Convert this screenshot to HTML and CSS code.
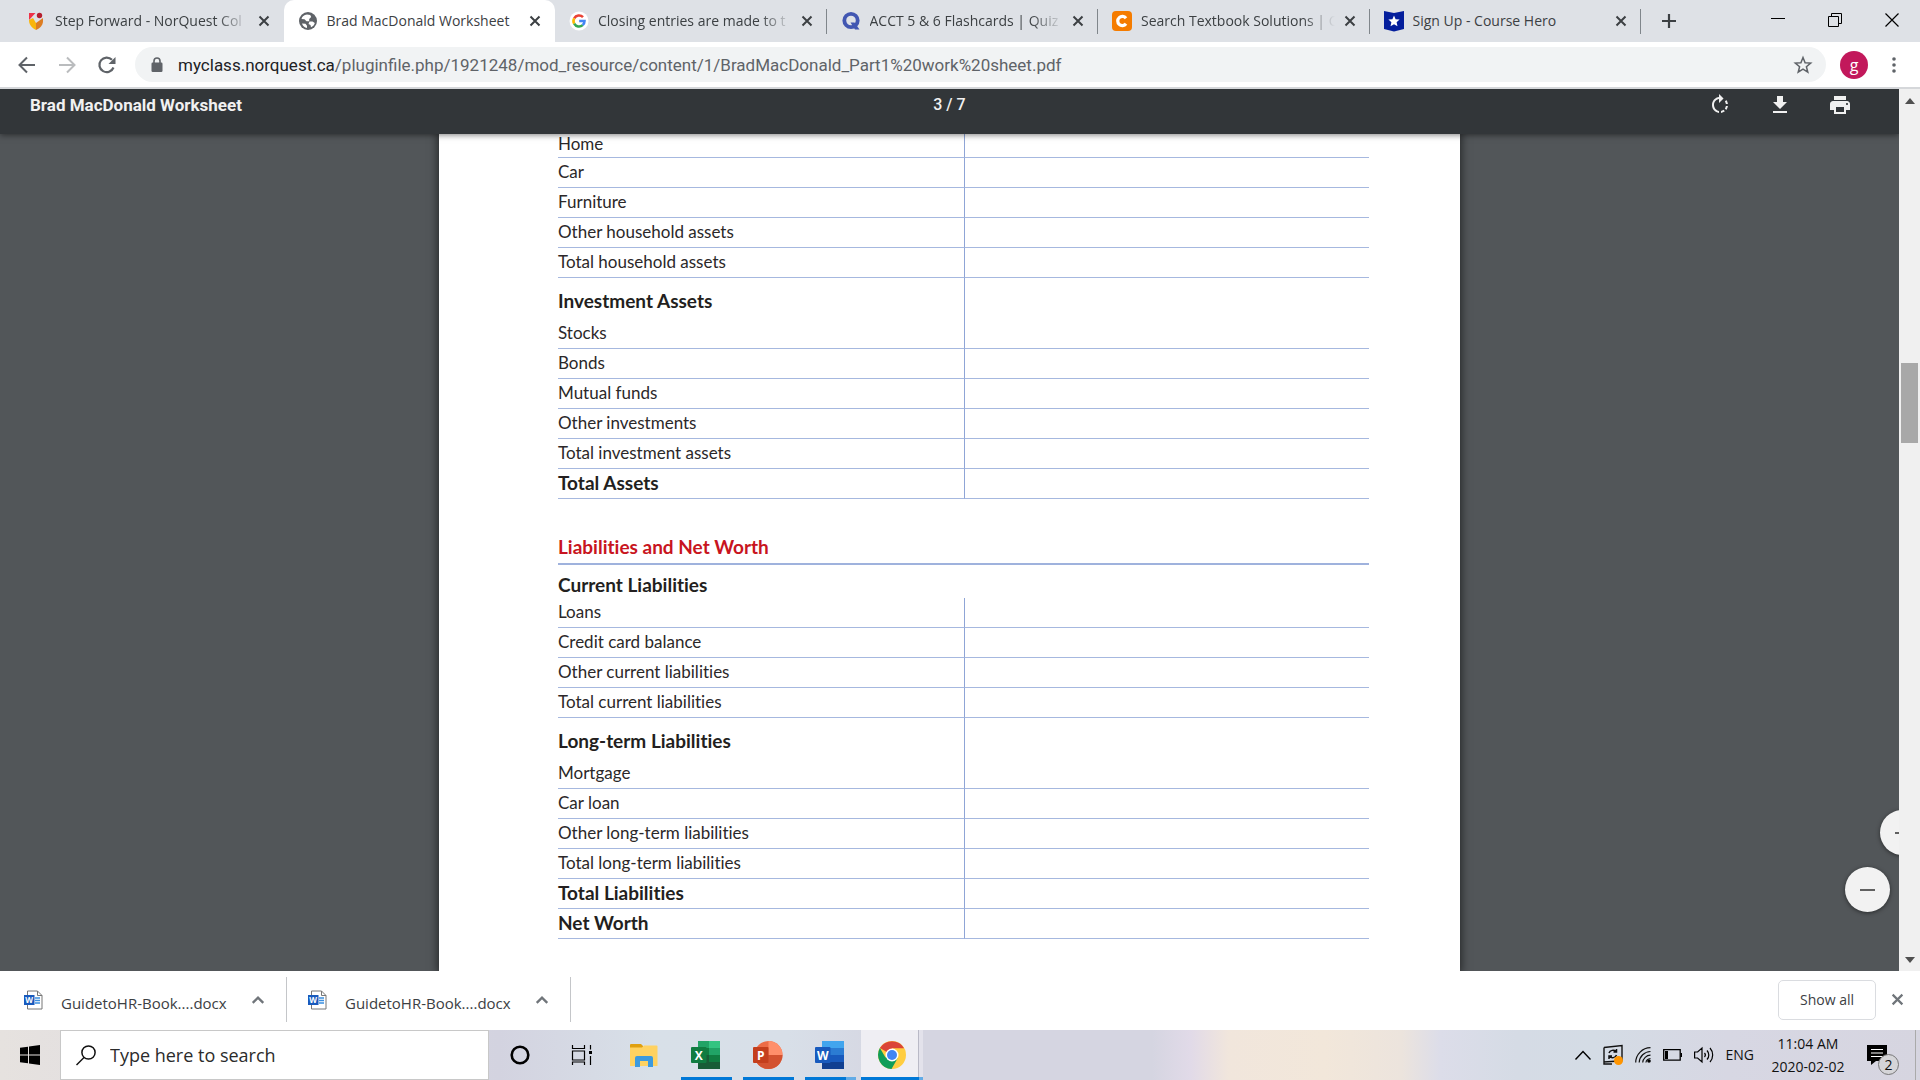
FILE: index.html
```html
<!DOCTYPE html>
<html lang="en">
<head>
<meta charset="utf-8">
<title>Brad MacDonald Worksheet</title>
<link rel="stylesheet" href="styles.css">
</head>
<body>
<svg class="defs" width="0" height="0" aria-hidden="true">
  <symbol id="close" viewBox="0 0 12 12"><path d="M1.5 1.5l9 9M10.5 1.5l-9 9" fill="none" stroke="currentColor" stroke-width="2"/></symbol>
  <symbol id="up" viewBox="0 0 12 12"><path d="M1.5 8.5L6 4l4.500 4.500" fill="none" stroke="currentColor" stroke-width="2"/></symbol>
  <symbol id="docx" viewBox="0 0 20 20"><path d="M3.500 1h10l4.500 4.500V19H3.500z" fill="#fff" stroke="#777"/><path d="M13.500 1v4.500H18" fill="none" stroke="#777"/><path d="M11 8h5M11 10.500h5M11 13h5" stroke="#3a8ee0" stroke-width="1.300"/><rect y="5" width="10.500" height="10" fill="#185abd"/><text x="5.200" y="13" text-anchor="middle" font-family="Open Sans, sans-serif" font-weight="700" font-size="8" fill="#fff">W</text></symbol>
</svg>

<header class="tabstrip">
  <nav class="tabs" aria-label="Tabs">
    <div class="tab">
      <svg class="favicon" viewBox="0 0 18 18"><path d="M2 1h6.500L2 8z" fill="#ee3148"/><circle cx="12.500" cy="3.500" r="2.700" fill="#b5202f"/><path d="M2 8l4-2 3 5v7C4 15.500 2 12 2 8z" fill="#f9b50b"/><path d="M16 6v3c0 4-3 7.500-7 9v-7z" fill="#dd7d22"/></svg>
      <a href="#" class="title">Step Forward - NorQuest Col</a>
      <button aria-label="Close tab"><svg><use href="#close"/></svg></button>
    </div>
    <div class="tab active">
      <svg class="favicon" viewBox="0 0 18 18"><circle cx="9" cy="9" r="9" fill="#5f6368"/><path d="M8 2.500c-3 .5-5 2-5.500 4.500l3 .2 2 2h2.700V7l2-2-1-2zM3 11.500l3.500.3 1.500 2V16C5.500 15.500 3.800 14 3 11.500zM10.500 9.500h3l2.300 1.500c-.6 2-2 3.600-3.800 4.300l-.5-2.300-2-1z" fill="#fff"/></svg>
      <a href="#" class="title whole">Brad MacDonald Worksheet</a>
      <button aria-label="Close tab"><svg><use href="#close"/></svg></button>
    </div>
    <div class="tab">
      <svg class="favicon" viewBox="0 0 18 18"><circle cx="9" cy="9" r="9.500" fill="#fff"/><g fill="none" stroke-width="2.600"><path d="M4.200 6.300A5.500 5.500 0 0 1 13 5.200" stroke="#ea4335"/><path d="M4.200 11.700a5.500 5.500 0 0 1 0-5.400" stroke="#fbbc05"/><path d="M12.700 13.100a5.500 5.500 0 0 1-8.500-1.400" stroke="#34a853"/><path d="M9.200 9h5.300a5.500 5.500 0 0 1-1.800 4.100" stroke="#4285f4"/></g></svg>
      <a href="#" class="title">Closing entries are made to t</a>
      <button aria-label="Close tab"><svg><use href="#close"/></svg></button>
    </div>
    <div class="tab">
      <svg class="favicon" viewBox="0 0 18 18"><circle cx="9" cy="8.500" r="6.700" fill="none" stroke="#4257b2" stroke-width="3.800"/><path d="M8.500 10.500h4l5 7h-4.500z" fill="#4257b2"/></svg>
      <a href="#" class="title">ACCT 5 &amp; 6 Flashcards | Quiz</a>
      <button aria-label="Close tab"><svg><use href="#close"/></svg></button>
    </div>
    <div class="tab">
      <svg class="favicon" viewBox="0 0 18 18"><rect x="-1" y="-1" width="20" height="20" rx="4" fill="#f57c00"/><path d="M13 6.200A4.600 4.600 0 1 0 13 11.800" fill="none" stroke="#fff" stroke-width="3.200"/></svg>
      <a href="#" class="title">Search Textbook Solutions | C</a>
      <button aria-label="Close tab"><svg><use href="#close"/></svg></button>
    </div>
    <div class="tab">
      <svg class="favicon" viewBox="0 0 18 18"><path d="M-1-1l10 2 10-2v18L9 19.500-1 17z" fill="#041e9c"/><path d="M9 3.500l1.600 3.700 4 .4-3 2.700.9 4L9 12.200l-3.500 2.100.9-4-3-2.700 4-.4z" fill="#fff"/></svg>
      <a href="#" class="title whole">Sign Up - Course Hero</a>
      <button aria-label="Close tab"><svg><use href="#close"/></svg></button>
    </div>
  </nav>
  <button class="new-tab" aria-label="New tab"><svg width="16" height="16" viewBox="0 0 16 16"><path d="M8 1v14M1 8h14" stroke="#3c4043" stroke-width="2.200"/></svg></button>
  <div class="window-controls">
    <button aria-label="Minimize"><svg width="14" height="14"><path d="M0 5.500h14" stroke="#000"/></svg></button>
    <button aria-label="Restore"><svg width="14" height="14"><path d="M.5 3.500h10v10H.5zM3.500 3V.5h10v10H11" fill="none" stroke="#000"/></svg></button>
    <button aria-label="Close"><svg width="14" height="14"><path d="M.5.5l13 13M13.500.5l-13 13" stroke="#000" stroke-width="1.200"/></svg></button>
  </div>
</header>

<div class="toolbar">
  <button aria-label="Back"><svg width="18" height="18" viewBox="0 0 18 18"><path d="M17 9H2M9 1.500L1.500 9 9 16.500" fill="none" stroke="#5f6368" stroke-width="2"/></svg></button>
  <button aria-label="Forward"><svg width="18" height="18" viewBox="0 0 18 18"><path d="M1 9h15M9 1.500L16.500 9 9 16.500" fill="none" stroke="#babcbe" stroke-width="2"/></svg></button>
  <button aria-label="Reload"><svg width="18" height="18" viewBox="0 0 18 18"><path d="M15.500 11.500A7.300 7.300 0 1 1 14 3.800" fill="none" stroke="#5f6368" stroke-width="2.200"/><path d="M17.500 1v7h-7z" fill="#5f6368"/></svg></button>
  <div class="omnibox">
    <svg width="12" height="16" viewBox="0 0 12 16"><path d="M3 7V4a3 3 0 0 1 6 0v3" fill="none" stroke="#5f6368" stroke-width="1.600"/><rect x="0.500" y="5.500" width="11" height="9.500" rx="1.200" fill="#5f6368"/></svg>
    <a class="url" href="#"><b>myclass.norquest.ca</b>/pluginfile.php/1921248/mod_resource/content/1/BradMacDonald_Part1%20work%20sheet.pdf</a>
    <button aria-label="Bookmark this page"><svg width="18" height="18" viewBox="0 0 18 18"><path d="M9 1.500l2.100 5.200 5.600.4-4.300 3.600 1.400 5.500L9 13.200l-4.800 3 1.400-5.500L1.300 7.100l5.600-.4z" fill="none" stroke="#5f6368" stroke-width="1.500"/></svg></button>
  </div>
  <button class="avatar" aria-label="Profile">g</button>
  <button class="more" aria-label="Menu"><svg width="4" height="18"><circle cx="2" cy="3" r="1.800"/><circle cx="2" cy="9" r="1.800"/><circle cx="2" cy="15" r="1.800"/></svg></button>
</div>

<main class="viewer">
  <section class="document">
    <div class="pdf-bar">
      <h1>Brad MacDonald Worksheet</h1>
      <span class="pages">3 / 7</span>
      <div class="pdf-actions">
        <button aria-label="Rotate"><svg width="24" height="24" viewBox="0 0 24 24" fill="#f1f1f1"><path d="M15.550 5.550L11 1v3.070C7.060 4.560 4 7.920 4 12s3.050 7.440 7 7.930v-2.020c-2.840-.48-5-2.940-5-5.910s2.160-5.430 5-5.910V10l4.550-4.450zM19.930 11c-.17-1.390-.72-2.730-1.620-3.890l-1.420 1.420c.54.750.88 1.600 1.020 2.470h2.020zM13 17.900v2.020c1.390-.17 2.740-.71 3.900-1.610l-1.440-1.440c-.75.540-1.590.890-2.460 1.030zm3.890-2.420l1.420 1.410c.9-1.160 1.450-2.500 1.620-3.890h-2.020c-.14.870-.48 1.720-1.020 2.480z"/></svg></button>
        <button aria-label="Download"><svg width="24" height="24" viewBox="0 0 24 24" fill="#f1f1f1"><path d="M19 9h-4V3H9v6H5l7 7 7-7zM5 18v2h14v-2H5z"/></svg></button>
        <button aria-label="Print"><svg width="24" height="24" viewBox="0 0 24 24" fill="#f1f1f1"><path d="M19 8H5c-1.660 0-3 1.340-3 3v6h4v4h12v-4h4v-6c0-1.660-1.340-3-3-3zm-3 11H8v-5h8v5zm3-7c-.55 0-1-.45-1-1s.45-1 1-1 1 .45 1 1-.45 1-1 1zm-1-9H6v4h12V3z"/></svg></button>
      </div>
    </div>
    <article class="sheet">
      <table>
        <tbody>
          <tr class="first"><th scope="row">Home</th><td></td></tr>
          <tr><th scope="row">Car</th><td></td></tr>
          <tr><th scope="row">Furniture</th><td></td></tr>
          <tr><th scope="row">Other household assets</th><td></td></tr>
          <tr><th scope="row">Total household assets</th><td></td></tr>
          <tr class="group"><th scope="row">Investment Assets</th><td></td></tr>
          <tr><th scope="row">Stocks</th><td></td></tr>
          <tr><th scope="row">Bonds</th><td></td></tr>
          <tr><th scope="row">Mutual funds</th><td></td></tr>
          <tr><th scope="row">Other investments</th><td></td></tr>
          <tr><th scope="row">Total investment assets</th><td></td></tr>
          <tr class="total"><th scope="row">Total Assets</th><td></td></tr>
        </tbody>
      </table>
      <h2>Liabilities and Net Worth</h2>
      <table>
        <tbody>
          <tr class="group lead"><th scope="row">Current Liabilities</th><td></td></tr>
          <tr><th scope="row">Loans</th><td></td></tr>
          <tr><th scope="row">Credit card balance</th><td></td></tr>
          <tr><th scope="row">Other current liabilities</th><td></td></tr>
          <tr><th scope="row">Total current liabilities</th><td></td></tr>
          <tr class="group"><th scope="row">Long-term Liabilities</th><td></td></tr>
          <tr><th scope="row">Mortgage</th><td></td></tr>
          <tr><th scope="row">Car loan</th><td></td></tr>
          <tr><th scope="row">Other long-term liabilities</th><td></td></tr>
          <tr><th scope="row">Total long-term liabilities</th><td></td></tr>
          <tr class="total"><th scope="row">Total Liabilities</th><td></td></tr>
          <tr class="total"><th scope="row">Net Worth</th><td></td></tr>
        </tbody>
      </table>
    </article>
    <button class="zoom zoom-in" aria-label="Zoom in"></button>
    <button class="zoom zoom-out" aria-label="Zoom out"></button>
  </section>
  <div class="scrollbar" aria-hidden="true">
    <svg width="10" height="6"><path d="M0 6l5-6 5 6z" fill="#505050"/></svg>
    <div class="track"><div class="thumb"></div></div>
    <svg width="10" height="6"><path d="M0 0l5 6 5-6z" fill="#505050"/></svg>
  </div>
</main>

<section class="downloads" aria-label="Downloads">
  <div class="download">
    <svg class="file"><use href="#docx"/></svg>
    <a href="#">GuidetoHR-Book....docx</a>
    <button aria-label="Options"><svg><use href="#up"/></svg></button>
  </div>
  <div class="download">
    <svg class="file"><use href="#docx"/></svg>
    <a href="#">GuidetoHR-Book....docx</a>
    <button aria-label="Options"><svg><use href="#up"/></svg></button>
  </div>
  <button class="show-all">Show all</button>
  <button class="dismiss" aria-label="Close downloads"><svg><use href="#close"/></svg></button>
</section>

<footer class="taskbar">
  <button class="start" aria-label="Start"><svg width="20" height="20" viewBox="0 0 20 20"><path d="M0 2.800L8 1.700v7.800H0zM9 1.500L20 0v9.500H9zM0 10.500h8v7.800l-8-1.100zM9 10.500h11V20L9 18.500z"/></svg></button>
  <label class="search">
    <svg width="20" height="20" viewBox="0 0 20 20"><circle cx="12.500" cy="7.500" r="6.600" fill="none" stroke="#111" stroke-width="1.500"/><path d="M8 12.500L.5 20" stroke="#111" stroke-width="1.500"/></svg>
    <input type="text" placeholder="Type here to search" aria-label="Search">
  </label>
  <nav class="apps" aria-label="Taskbar apps">
    <button aria-label="Cortana"><svg width="20" height="20"><circle cx="10" cy="10" r="8.300" fill="none" stroke="#000" stroke-width="2.600"/></svg></button>
    <button aria-label="Task view"><svg width="20" height="20" viewBox="0 0 20 20"><path d="M.5 0v3.500h12V0M.5 6h12v9H.5zM.5 20v-3h12v3M18.500 0v4.500M18.500 11v9" fill="none" stroke="#000" stroke-width="1.200"/><path d="M17 6h3v3h-3z"/></svg></button>
    <button aria-label="File Explorer"><svg width="28" height="28" viewBox="0 0 28 28"><path d="M0 4V4a1 1 0 0 1 1-1h10l2 2v4H0z" fill="#e0a00f"/><path d="M0 6.500h12l2-2h12.500a1 1 0 0 1 1 1V25H0z" fill="#ffd261"/><path d="M5 26V17a2 2 0 0 1 2-2h14a2 2 0 0 1 2 2v9h-5v-6h-8v6z" fill="#3d9ade"/></svg></button>
    <button class="running" aria-label="Excel"><svg width="30" height="30" viewBox="0 0 30 30"><path d="M7 1h11v7H7z" fill="#21a366"/><path d="M18 1h11v7H18z" fill="#33c481"/><path d="M7 8h11v7H7z" fill="#107c41"/><path d="M18 8h11v7H18z" fill="#21a366"/><path d="M7 15h22v14H7z" fill="#185c37"/><path d="M18 15h11v7H18z" fill="#107c41"/><rect y="7" width="15.500" height="16" rx="1" fill="#107c41"/><text x="7.800" y="19.500" text-anchor="middle" class="mark">X</text></svg></button>
    <button class="running" aria-label="PowerPoint"><svg width="30" height="30" viewBox="0 0 30 30"><circle cx="15.500" cy="15" r="14" fill="#ed6c47"/><path d="M15.500 1a14 14 0 0 1 14 14h-14z" fill="#ff8f6b"/><path d="M1.500 15a14 14 0 0 0 28 0z" fill="#d35230"/><rect y="7" width="15.500" height="16" rx="1" fill="#c43e1c"/><text x="7.800" y="19.500" text-anchor="middle" class="mark">P</text></svg></button>
    <button class="running several" aria-label="Word"><svg width="30" height="30" viewBox="0 0 30 30"><path d="M7 1h22v7H7z" fill="#41a5ee"/><path d="M7 8h22v7H7z" fill="#2b7cd3"/><path d="M7 15h22v7H7z" fill="#185abd"/><path d="M7 22h22v7H7z" fill="#103f91"/><rect y="7" width="15.500" height="16" rx="1" fill="#185abd"/><text x="7.800" y="19.500" text-anchor="middle" class="mark">W</text></svg></button>
    <button class="running current" aria-label="Chrome"><svg width="28" height="28" viewBox="0 0 28 28"><circle cx="14" cy="14" r="14" fill="#ffcd40"/><path d="M14 14L1.900 7A14 14 0 0 1 26.100 7.200H14z" fill="#db4437"/><path d="M1.900 7A14 14 0 0 0 13.500 28l6-10.500L14 14 7.500 16.500z" fill="#0f9d58"/><circle cx="14" cy="14" r="6.500" fill="#fff"/><circle cx="14" cy="14" r="5" fill="#4285f4"/></svg></button>
  </nav>
  <div class="tray">
    <button aria-label="Show hidden icons"><svg width="16" height="10"><path d="M.5 9.500L8 1.500l7.500 8" fill="none" stroke="#000" stroke-width="1.400"/></svg></button>
    <button aria-label="Update"><svg width="20" height="20" viewBox="0 0 20 20"><path d="M1 2.500l18-2v15l-6 .5M1 2.500v14.500l11-.8M1 17v2h8" fill="none" stroke="#111" stroke-width="1.400"/><path d="M6 8c1-3 5-3.500 7-1.500M13.500 4v3h-3M13.500 10c-1 3-5 3.500-7 1.500M6 14v-3h3" fill="none" stroke="#111" stroke-width="1.500"/><circle cx="15.500" cy="15.500" r="4.500" fill="#ff9500"/></svg></button>
    <button aria-label="Network"><svg width="16" height="16" viewBox="0 0 16 16"><path d="M.7 15.500A15 15 0 0 1 15.500.7M4.200 15.500A11.500 11.500 0 0 1 15.500 4.500M7.700 15.500a8 8 0 0 1 7.800-7.300M10.900 15.500a5 5 0 0 1 4.600-4" fill="none" stroke="#111" stroke-width="1.200"/><circle cx="14" cy="14" r="1.800"/></svg></button>
    <button aria-label="Battery"><svg width="19" height="12"><path d="M.7.7h16.500v10.500H.7z" fill="none" stroke="#000" stroke-width="1.300"/><path d="M2 2h3v8H2zM17.500 4H19v4h-1.500z"/></svg></button>
    <button aria-label="Volume"><svg width="20" height="18" viewBox="0 0 20 18"><path d="M.6 6h3L8 2v14l-4.400-4h-3zM10.500 7a3 3 0 0 1 0 4M13 4.500a6.500 6.500 0 0 1 0 9M16 2a10.500 10.500 0 0 1 0 14" fill="none" stroke="#000" stroke-width="1.200"/></svg></button>
    <button>ENG</button>
    <button class="clock"><time>11:04 AM</time><time>2020-02-02</time></button>
    <button class="notices" aria-label="Notifications"><svg width="20" height="20" viewBox="0 0 20 20"><path d="M0 0h20v16H9l-5 4v-4H0z"/><path d="M4 4.500h12M4 8h12M4 11.500h12" stroke="#fff" stroke-width="1.200"/></svg><span class="badge">2</span></button>
    <button class="desktop" aria-label="Show desktop"></button>
  </div>
</footer>
</body>
</html>
```

FILE: styles.css
```css
* { box-sizing: border-box; }

body {
  margin: 0;
  height: 100vh;
  display: flex;
  flex-direction: column;
  overflow: hidden;
  background: #fff;
  color: #3c4043;
  font: 14px/20px "Open Sans", "Noto Sans", sans-serif;
}

button {
  display: flex;
  align-items: center;
  justify-content: center;
  flex: none;
  margin: 0;
  padding: 0;
  border: 0;
  background: none;
  color: inherit;
  font: inherit;
}

a { color: inherit; text-decoration: none; }
svg { display: block; flex: none; overflow: visible; }
.defs { position: absolute; }

/* Tab strip */
.tabstrip {
  display: flex;
  align-items: center;
  flex: none;
  height: 42px;
  padding-left: 12px;
  background: #dee1e6;
}

.tabs { display: flex; flex: 0 1 1629px; min-width: 0; align-self: stretch; }

.tab {
  display: flex;
  flex: 1 1 0;
  min-width: 0;
  align-items: center;
  padding: 0 14px 0 15px;
  position: relative;
}

.tab:nth-child(n+3)::after {
  content: "";
  position: absolute;
  right: 0;
  top: 9px;
  width: 1px;
  height: 25px;
  background: #80868b;
}

.tab.active { background: #fff; border-radius: 10px 10px 0 0; }
.favicon { width: 18px; height: 18px; margin-right: 10px; }

.title {
  flex: 1;
  min-width: 0;
  overflow: hidden;
  white-space: nowrap;
  margin-right: 5px;
  -webkit-mask-image: linear-gradient(90deg, #000 calc(100% - 36px), transparent calc(100% - 4px));
  mask-image: linear-gradient(90deg, #000 calc(100% - 36px), transparent calc(100% - 4px));
}

.title.whole { -webkit-mask-image: none; mask-image: none; }
.tab button svg { width: 12px; height: 12px; }
.new-tab { width: 56px; height: 40px; }
.window-controls { display: flex; margin-left: auto; }
.window-controls button { width: 57px; height: 40px; padding-bottom: 2px; }

/* Address bar */
.toolbar {
  display: flex;
  align-items: center;
  flex: none;
  height: 47px;
  padding: 0 12px 0 7px;
  border-bottom: 2px solid #d5d7da;
}

.toolbar > button { width: 40px; height: 36px; }

.omnibox {
  display: flex;
  align-items: center;
  flex: 1;
  min-width: 0;
  height: 35px;
  margin-left: 8px;
  padding: 0 14px 0 16px;
  border-radius: 18px;
  background: #f1f3f4;
}

.url {
  flex: 1;
  min-width: 0;
  overflow: hidden;
  white-space: nowrap;
  padding-left: 15px;
  color: #5f6368;
  font: 17px/24px Roboto, "Open Sans", sans-serif;
}

.url b { color: #202124; font-weight: 400; }

.toolbar > .avatar {
  width: 28px;
  height: 28px;
  margin: 0 12px 0 14px;
  border-radius: 50%;
  background: #c2185b;
  color: #fff;
  font-size: 16px;
}

.toolbar > .more { width: 28px; fill: #5f6368; }

/* Document viewer */
.viewer { display: flex; flex: 1; min-height: 0; }

.document {
  position: relative;
  display: flex;
  flex-direction: column;
  flex: 1;
  min-width: 0;
  overflow: hidden;
  background: #525659;
}

.pdf-bar {
  display: grid;
  grid-template-columns: 1fr auto 1fr;
  align-items: center;
  flex: none;
  height: 45px;
  padding: 0 47px 13px 30px;
  position: relative;
  z-index: 1;
  background: #323639;
  box-shadow: 0 1px 6px rgba(0, 0, 0, .5);
  color: #f1f1f1;
  font: 17px/24px Roboto, sans-serif;
}

.pdf-bar h1 { margin: 0; font-size: 17px; font-weight: 700; }
.pages { padding-left: 17px; font-size: 16px; font-weight: 500; }
.pdf-actions { display: flex; justify-content: flex-end; gap: 36px; }

.sheet {
  flex: 1;
  width: 100%;
  max-width: 1021px;
  margin: 0 auto;
  padding: 0 91px 0 119px;
  background: #fff;
  box-shadow: 0 0 8px 2px rgba(0, 0, 0, .5);
  color: #2b2829;
  font: 17px/20px Lato, sans-serif;
  font-variant-ligatures: none;
}

table { width: 100%; table-layout: fixed; border-collapse: separate; border-spacing: 0; }

th, td {
  height: 30px;
  padding: 0 0 5px;
  border-bottom: 1px solid #a6b8df;
  text-align: left;
  vertical-align: bottom;
  font-weight: 400;
}

td { border-left: 1px solid #8fa5d6; }
.first th, .first td { height: 24px; padding-bottom: 3px; }
.total th, .group th { font-size: 19px; font-weight: 700; color: #231f20; }
.group th, .group td { height: 41px; padding-bottom: 8px; border-bottom: 0; }
.group.lead th, .group.lead td { height: 33px; padding-bottom: 3px; }
.group.lead td { border-left: 0; }

h2 {
  display: flex;
  align-items: flex-end;
  height: 66px;
  margin: 0;
  padding-bottom: 6px;
  border-bottom: 2px solid #9fb2dd;
  color: #c81420;
  font-size: 19px;
  font-weight: 700;
}

.zoom {
  position: absolute;
  right: 9px;
  bottom: 59px;
  width: 45px;
  height: 45px;
  border-radius: 50%;
  background: #f2f2f2;
  box-shadow: 0 1px 4px rgba(0, 0, 0, .5);
}

.zoom::before { content: ""; width: 15px; height: 2px; background: #616161; }
.zoom-in { right: -26px; bottom: 116px; }

.scrollbar {
  display: flex;
  flex-direction: column;
  align-items: center;
  flex: none;
  width: 21px;
  padding: 9px 0 8px;
  background: #f0f0f0;
}

.track { flex: 1; width: 17px; padding-top: 259px; }
.thumb { height: 80px; background: #a8a8a8; }

/* Downloads */
.downloads {
  display: flex;
  align-items: center;
  flex: none;
  height: 59px;
  padding: 0 16px 2px 3px;
}

.download {
  display: flex;
  align-items: center;
  width: 284px;
  height: 45px;
  padding: 0 21px;
  border-right: 1px solid #c4c6c9;
  font-size: 15px;
}

.file { width: 20px; height: 20px; margin-right: 17px; }
.download a { flex: 1; padding-top: 7px; }
.download button { color: #70757a; }
.download button svg { width: 14px; height: 14px; }

.show-all {
  width: 98px;
  height: 40px;
  margin-left: auto;
  border: 1px solid #dadce0;
  border-radius: 5px;
}

.dismiss { margin-left: 15px; color: #70757a; }
.dismiss svg { width: 13px; height: 13px; }

/* Taskbar */
.taskbar {
  display: flex;
  align-items: stretch;
  flex: none;
  height: 50px;
  color: #111;
  background: linear-gradient(90deg, #e6e2df 0, #e4e0e0 4%, #d3d3e0 26%, #d8e0e8 34%, #d8dfe8 41%, #d5d5e1 47%, #d5d5e1 60%, #e1dae8 62%, #f1e6dc 64%, #f2e7da 69%, #ece4dd 73%, #dcdde9 75%, #d5dbe5 79%, #d4dce5 83%, #d7d7e3 90%, #d6d5e0 100%);
}

.start { width: 60px; }

.search {
  display: flex;
  align-items: center;
  flex: 0 1 429px;
  padding: 0 15px;
  border: 1px solid #c8c8c8;
  background: #fff;
}

.search input {
  flex: 1;
  min-width: 0;
  margin-left: 14px;
  padding: 0;
  border: 0;
  outline: 0;
  font: 18px/24px "Open Sans", sans-serif;
}

.search input::placeholder { color: #2b2b2b; opacity: 1; }
.apps { display: flex; }
.apps button { position: relative; width: 62px; }
.mark { font: 700 12px "Open Sans", sans-serif; fill: #fff; }

.running::after {
  content: "";
  position: absolute;
  left: 6px;
  right: 5px;
  bottom: 0;
  height: 3px;
  background: #0078d7;
}

.several::after { background: linear-gradient(90deg, #0078d7 80%, #62abe6 80%); }
.current { background: linear-gradient(90deg, #efeef3 92%, #b9b9c6 92% 93%, #e3e2eb 93%); }
.current::after { left: 0; right: 0; background: linear-gradient(90deg, #0078d7 93%, #62abe6 93%); }

.tray { display: flex; gap: 12px; margin-left: auto; }
.clock { flex-direction: column; width: 84px; line-height: 23px; }
.notices { position: relative; width: 38px; padding: 0 8px 0 0; }

.badge {
  position: absolute;
  right: 1px;
  bottom: 5px;
  width: 21px;
  height: 21px;
  border: 1px solid #777;
  border-radius: 50%;
  background: #d5d5d8;
  line-height: 19px;
}

.desktop { width: 5px; margin-left: 3px; border-left: 1px solid #aaa; }
```
